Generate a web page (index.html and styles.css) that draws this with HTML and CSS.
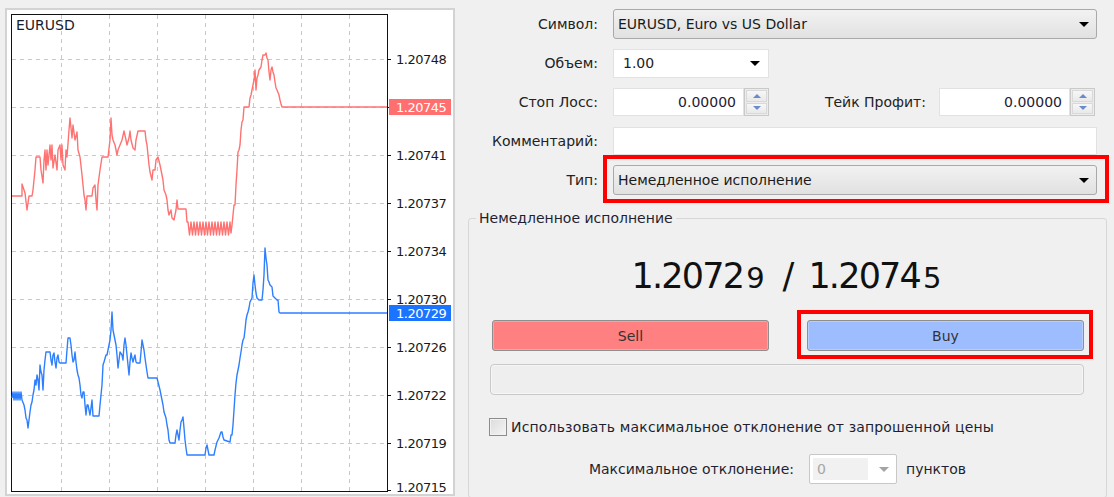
FILE: index.html
```html
<!DOCTYPE html>
<html lang="ru">
<head>
<meta charset="utf-8">
<title>Ордер</title>
<link rel="stylesheet" href="styles.css">
</head>
<body>
<div class="app">
  <section class="chart-frame">
    <svg class="chart" width="446" height="484" viewBox="7 10 446 484">
      <path class="grid" d="M61.5 15V491 M109.5 15V491 M157.5 15V491 M205.5 15V491 M253.5 15V491 M301.5 15V491 M349.5 15V491 M12 59.5H387 M12 107.5H387 M12 155.5H387 M12 203.5H387 M12 251.5H387 M12 299.5H387 M12 347.5H387 M12 395.5H387 M12 443.5H387"/>
      <rect class="plot" x="11.5" y="14.5" width="376" height="477"/>
      <path class="ticks" d="M388 59.5H391 M388 107.5H391 M388 155.5H391 M388 203.5H391 M388 251.5H391 M388 299.5H391 M388 347.5H391 M388 395.5H391 M388 443.5H391 M388 490.5H391"/>
      <text class="sym" x="16" y="30">EURUSD</text>
      <polyline class="line-ask" points="12,196 22,196 22,184 25,193 27,210 29,196 32,196 33,190 35,170 36,157 40,157 41,170 43,183 44,160 45,150 46,170 47,150 48,165 50,145 51,160 52,145 53,168 55,155 57,170 58,150 60,145 61,160 62,145 63,165 65,170 66,150 67,157 69,130 70,118 72,138 73,125 75,140 77,132 78,150 80,157 82,175 83,185 84,195 85,200 86,210 87,196 92,196 93,188 95,185 96,200 97,210 98,185 100,170 102,157 108,157 110,140 111,118 112,135 113,140 115,145 117,155 118,150 120,145 122,140 124,131 126,140 127,145 129,138 130,131 131,140 133,148 135,150 136,140 138,131 145,131 146,140 147,145 148,155 149,165 150,172 152,180 153,170 155,170 156,160 158,157 160,165 161,170 163,180 164,190 166,195 167,200 168,210 169,215 171,210 172,218 174,220 176,210 177,200 178,209 186,209 187,222 188,222 189.5,235 191,222 192.5,235 194,222 195.5,235 197,222 198.5,235 200,222 201.5,235 203,222 204.5,235 206,222 207.5,235 209,222 210.5,235 212,222 213.5,235 215,222 216.5,235 218,222 219.5,235 221,222 222.5,235 224,222 225.5,235 227,222 228.5,235 230,222 231,233 232,225 233,215 234,205 235,205 236,185 237,170 238,152 239,150 240,145 241,130 242,122 243,120 244,107 249,107 250,98 251,95 252,90 253,85 254,80 255,70 256,90 257,78 258,75 259,70 261,67 262,60 263,55 265,55 266,53 267,58 268,60 269,72 270,80 271,70 272,67 273,72 274,75 275,82 276,88 277,90 279,95 280,100 281,104 282,107 387,107"/>
      <polyline class="line-bid" points="12,398 13,392 14,400 15,392 16,400 17,392 18,400 19,392 20,400 21,392 22,400 24,405 25,410 26,418 27,420 28,428 29,420 30,412 31,405 32,402 33,395 34,390 35,380 36,385 37,375 38,380 39,390 40,365 41,372 42,375 43,390 44,370 45,360 46,352 50,352 51,360 52,365 53,355 54,353 55,362 56,368 57,358 58,355 59,362 60,363 66,363 67,350 68,338 70,338 71,345 72,355 73,362 74,360 75,352 76,362 77,370 78,375 79,378 80,385 81,395 82,398 83,392 84,392 85,405 86,415 87,405 88,405 89,410 90,415 91,408 92,400 93,416 99,416 100,405 101,395 102,385 103,365 104,362 106,355 107,355 108,350 109,345 110,340 111,330 112,312 113,330 114,335 115,340 116,345 117,355 118,368 119,360 120,352 122,355 123,360 124,345 125,338 126,345 127,355 128,365 129,375 130,362 131,353 132,358 133,362 134,358 135,355 136,362 137,363 140,363 141,352 142,340 143,345 144,350 145,358 146,365 147,372 148,378 157,378 158,382 160,390 161,395 162,400 163,405 164,412 165,415 166,418 167,425 168,430 169,440 170,443 175,443 176,435 177,430 178,435 179,440 180,430 181,422 182,420 183,417 184,428 185,440 186,448 187,455 205,455 206,448 207,445 208,450 209,455 214,455 215,450 216,446 217,442 218,440 219,438 220,435 221,432 222,432 223,437 224,440 230,442 231,435 232,435 233,425 234,410 235,395 236,383 237,375 238,370 239,365 240,358 241,352 242,345 243,340 244,338 245,330 246,320 247,315 248,312 249,308 250,302 251,300 252,298 253,283 254,275 255,285 256,293 257,298 259,300 262,300 263,290 264,275 265,248 266,258 267,265 268,280 269,282 270,285 271,286 272,287 273,296 275,298 276,299 277,300 278,300 279,312 280,313 387,313"/>
      <g class="axis">
        <text x="396" y="64">1.20748</text>
        <text x="396" y="160">1.20741</text>
        <text x="396" y="208">1.20737</text>
        <text x="396" y="256">1.20734</text>
        <text x="396" y="304">1.20730</text>
        <text x="396" y="352">1.20726</text>
        <text x="396" y="400">1.20722</text>
        <text x="396" y="448">1.20719</text>
        <text x="396" y="492">1.20715</text>
        <rect class="tag-ask" x="389" y="99" width="62" height="16"/>
        <text class="tag-text" x="396" y="112">1.20745</text>
        <rect class="tag-bid" x="389" y="305" width="62" height="16"/>
        <text class="tag-text" x="396" y="318">1.20729</text>
      </g>
    </svg>
  </section>

  <section class="order">
    <div class="form">
      <label class="lbl">Символ:</label>
      <div class="combo"><span>EURUSD, Euro vs US Dollar</span><i class="arrow"></i></div>

      <label class="lbl">Объем:</label>
      <div class="field volume"><span>1.00</span><i class="arrow"></i></div>

      <label class="lbl">Стоп Лосс:</label>
      <div class="split">
        <div class="spin"><span class="spin-val">0.00000</span><span class="spin-btns"><b class="up"></b><b class="down"></b></span></div>
        <div class="tp">
          <label class="lbl">Тейк Профит:</label>
          <div class="spin"><span class="spin-val">0.00000</span><span class="spin-btns"><b class="up"></b><b class="down"></b></span></div>
        </div>
      </div>

      <label class="lbl">Комментарий:</label>
      <div class="field comment"></div>

      <label class="lbl">Тип:</label>
      <div class="combo"><span>Немедленное исполнение</span><i class="arrow"></i><span class="mark mark-type"></span></div>
    </div>

    <fieldset class="group">
      <legend>Немедленное исполнение</legend>
      <div class="group-body">
        <div class="quote">
          <span class="px">1.2072<small>9</small></span>
          <span class="sep">/</span>
          <span class="px">1.2074<small>5</small></span>
        </div>
        <div class="trade">
          <button class="btn sell">Sell</button>
          <div class="buy-wrap"><button class="btn buy">Buy</button><span class="mark mark-buy"></span></div>
        </div>
        <div class="status"></div>
        <label class="check"><span class="box"></span>Использовать максимальное отклонение от запрошенной цены</label>
        <div class="deviation">
          <span class="dev-label">Максимальное отклонение:</span>
          <div class="dev-combo"><span class="dev-val">0</span><i class="arrow gray"></i></div>
          <span class="units">пунктов</span>
        </div>
      </div>
    </fieldset>
  </section>
</div>
</body>
</html>
```

FILE: styles.css
```css
* { box-sizing: border-box; }
html, body { margin: 0; padding: 0; }
body {
  background: #f0f0f0;
  font-family: "DejaVu Sans", "Noto Sans", sans-serif;
  font-size: 14px;
  color: #222;
  width: 1114px;
  height: 497px;
  overflow: hidden;
}
.app { display: flex; align-items: flex-start; height: 497px; }

/* ---------- chart ---------- */
.chart-frame {
  flex: none;
  margin: 8px 0 0 5px;
  width: 450px;
  height: 488px;
  border: 2px solid #d3d3d3;
  background: #fff;
}
.chart { display: block; }
.grid { fill: none; stroke: #c9c9c9; stroke-width: 1; stroke-dasharray: 4 4; }
.plot { fill: none; stroke: #111; stroke-width: 1; }
.ticks { stroke: #111; stroke-width: 1; }
.sym { font-family: "DejaVu Sans", sans-serif; font-size: 14px; fill: #1b1b2b; }
.axis text { font-family: "DejaVu Sans", sans-serif; font-size: 13px; letter-spacing: -0.5px; fill: #1a1a1a; }
.axis .tag-text { fill: #fff; }
.tag-ask { fill: #ff6f6f; }
.tag-bid { fill: #1b74ff; }
.line-ask { fill: none; stroke: #ff7272; stroke-width: 1.4; stroke-linejoin: round; }
.line-bid { fill: none; stroke: #2e7fff; stroke-width: 1.4; stroke-linejoin: round; }

/* ---------- order form ---------- */
.order { flex: 1; min-width: 0; display: flex; flex-direction: column; }
.form {
  display: grid;
  grid-template-columns: 138px 1fr;
  grid-auto-rows: 30px;
  column-gap: 15px;
  row-gap: 9px;
  align-items: center;
  padding: 9px 17px 0 5px;
}
.lbl { text-align: right; white-space: nowrap; color: #222; }
.combo {
  position: relative;
  height: 30px;
  display: flex;
  align-items: center;
  justify-content: space-between;
  padding: 0 7px 0 4px;
  border: 1px solid #a9a9a9;
  border-radius: 3px;
  background: linear-gradient(#f2f2f2, #e1e1e1);
  color: #1a1a1a;
}
.arrow {
  flex: none;
  width: 0;
  height: 0;
  border-left: 5px solid transparent;
  border-right: 5px solid transparent;
  border-top: 5px solid #000;
}
.arrow.gray { border-top-color: #a3a3a3; }
.field { height: 29px; background: #fff; border: 1px solid #e2e2e2; }
.volume {
  width: 156px;
  display: flex;
  align-items: center;
  justify-content: space-between;
  padding: 0 8px 0 9px;
}
.comment { height: 28px; }
.split { display: flex; justify-content: space-between; align-items: center; padding-right: 2px; }
.tp { display: flex; align-items: center; gap: 13px; }
.spin { display: flex; height: 28px; }
.spin-val {
  width: 131px;
  background: #fff;
  border: 1px solid #e2e2e2;
  text-align: right;
  padding-right: 7px;
  line-height: 26px;
  color: #231a33;
}
.spin-btns {
  width: 25px;
  display: flex;
  flex-direction: column;
  gap: 1px;
  padding: 1px;
  border: 1px solid #c9c9c9;
  background: #ececec;
}
.spin-btns b {
  flex: 1;
  display: flex;
  align-items: center;
  justify-content: center;
  border: 1px solid #d9d9d9;
  background: linear-gradient(#f7f7f7, #e9e9e9);
}
.spin-btns .up::before {
  content: "";
  border-left: 4px solid transparent;
  border-right: 4px solid transparent;
  border-bottom: 4px solid #6a8bcb;
}
.spin-btns .down::before {
  content: "";
  border-left: 4px solid transparent;
  border-right: 4px solid transparent;
  border-top: 4px solid #6a8bcb;
}

/* annotation boxes */
.mark { position: absolute; border: 4px solid #ff0000; pointer-events: none; }
.mark-type { top: -11px; right: -13px; bottom: -9px; left: -11px; }
.mark-buy { top: -10px; right: -9px; bottom: -8px; left: -10px; }

/* ---------- group ---------- */
.group {
  margin: 15px 7px 0 13px;
  padding: 0 0 13px;
  border: 1px solid #d7d7d7;
  border-radius: 3px;
  min-width: 0;
}
.group legend { margin-left: 7px; padding: 0 3px; line-height: 17px; color: #1f1f30; }
.group-body { padding: 0 22px 0 20px; }
.quote {
  margin-top: 29px;
  display: flex;
  justify-content: center;
  align-items: baseline;
  font-size: 35px;
  line-height: 40px;
  letter-spacing: -1.8px;
  color: #111;
}
.quote small { font-size: 29px; letter-spacing: 0; margin-left: 3px; }
.sep { margin: 0 14px 0 18px; letter-spacing: 0; }
.trade {
  margin: 22px 0 0 3px;
  display: grid;
  grid-template-columns: 1fr 1fr;
  column-gap: 38px;
}
.buy-wrap { position: relative; }
.btn {
  display: block;
  width: 100%;
  height: 31px;
  margin: 0;
  font: inherit;
  color: #333;
  border: 1px solid #8e8e8e;
  border-radius: 3px;
  box-shadow: inset 0 0 0 1px rgba(255, 255, 255, 0.25);
}
.sell { background: #ff8080; }
.buy { background: #9dbdff; }
.status {
  margin: 13px 0 0 1px;
  height: 31px;
  border: 1px solid #c9c9c9;
  border-radius: 4px;
  background: #eeeeee;
  box-shadow: inset 0 0 0 1px #f6f6f6;
}
.check { margin-top: 22px; display: flex; align-items: center; gap: 4px; height: 20px; color: #1f1f30; letter-spacing: 0.16px; }
.box {
  flex: none;
  width: 18px;
  height: 18px;
  border: 1px solid #8c8c8c;
  background: linear-gradient(135deg, #dcdcdc, #f4f4f4);
  box-shadow: inset 0 0 0 1px #f2f2f2;
}
.deviation { margin-top: 17px; display: flex; align-items: center; height: 30px; }
.dev-label { flex: none; width: 305px; text-align: right; color: #1f1f30; }
.dev-combo {
  margin-left: 15px;
  width: 88px;
  height: 30px;
  display: flex;
  align-items: center;
  padding: 3px;
  border: 1px solid #c8c8c8;
  border-radius: 2px;
  background: #fff;
}
.dev-val {
  align-self: stretch;
  width: 55px;
  display: flex;
  align-items: center;
  padding-left: 4px;
  background: #f1f1f1;
  color: #a6a6a6;
}
.dev-combo .arrow { margin-left: 11px; }
.units { margin-left: 9px; color: #1f1f30; }
```
